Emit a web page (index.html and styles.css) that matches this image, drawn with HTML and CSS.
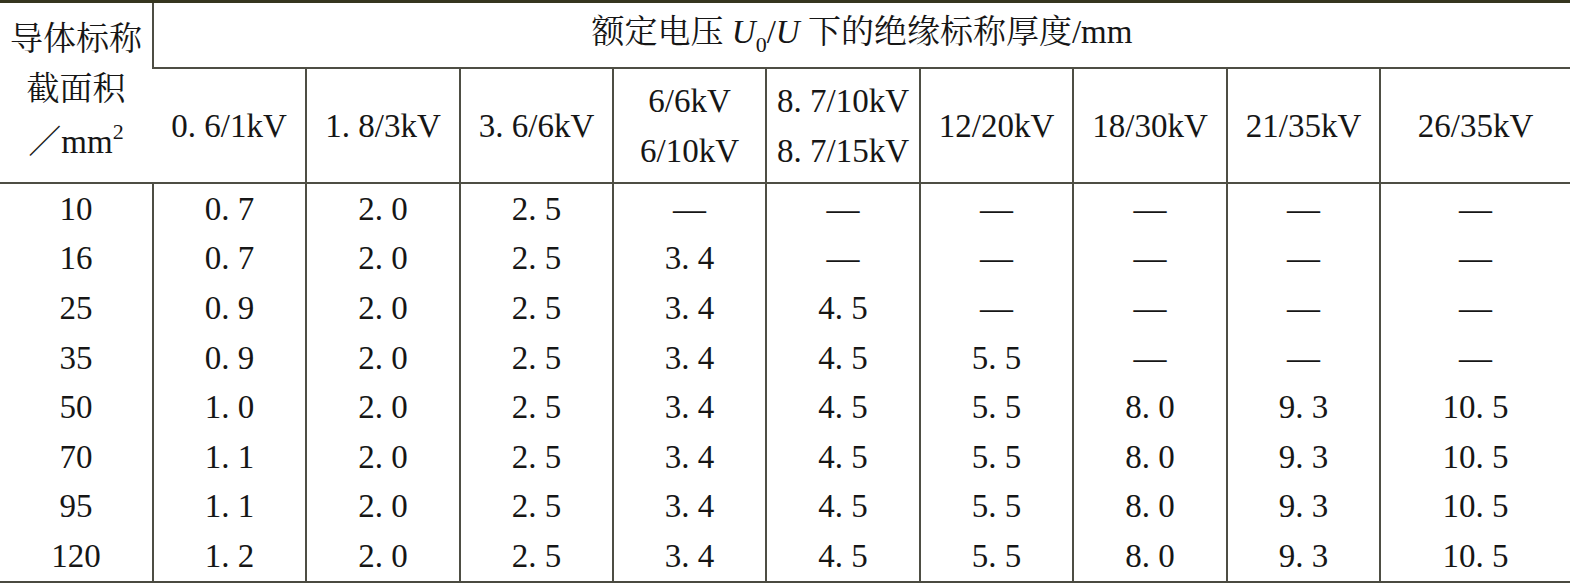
FILE: index.html
```html
<!DOCTYPE html>
<html lang="zh-CN">
  <head>
    <meta charset="UTF-8" />
    <title>绝缘标称厚度</title>
    <link rel="stylesheet" href="styles.css">
  </head>
  <body>
    <table class="thickTable">
      <colgroup>
        <col class="c1" />
        <col class="c2" />
        <col class="c3" />
        <col class="c4" />
        <col class="c5" />
        <col class="c6" />
        <col class="c7" />
        <col class="c8" />
        <col class="c9" />
        <col class="c10" />
      </colgroup>
      <thead>
        <tr class="headTop">
          <th rowspan="2" class="firstHead">导体标称<br />截面积<br /><span class="wideSlash">／</span>mm<sup>2</sup></th>
          <th colspan="9" class="mainHead">额定电压 <i>U</i><sub>0</sub>/<i>U</i> 下的绝缘标称厚度/mm</th>
        </tr>
        <tr class="headSub">
          <th>0. 6/1kV</th>
          <th>1. 8/3kV</th>
          <th>3. 6/6kV</th>
          <th>6/6kV<br />6/10kV</th>
          <th>8. 7/10kV<br />8. 7/15kV</th>
          <th>12/20kV</th>
          <th>18/30kV</th>
          <th>21/35kV</th>
          <th>26/35kV</th>
        </tr>
      </thead>
      <tbody>
        <tr>
          <td>10</td><td>0. 7</td><td>2. 0</td><td>2. 5</td><td>—</td><td>—</td><td>—</td><td>—</td><td>—</td><td>—</td>
        </tr>
        <tr>
          <td>16</td><td>0. 7</td><td>2. 0</td><td>2. 5</td><td>3. 4</td><td>—</td><td>—</td><td>—</td><td>—</td><td>—</td>
        </tr>
        <tr>
          <td>25</td><td>0. 9</td><td>2. 0</td><td>2. 5</td><td>3. 4</td><td>4. 5</td><td>—</td><td>—</td><td>—</td><td>—</td>
        </tr>
        <tr>
          <td>35</td><td>0. 9</td><td>2. 0</td><td>2. 5</td><td>3. 4</td><td>4. 5</td><td>5. 5</td><td>—</td><td>—</td><td>—</td>
        </tr>
        <tr>
          <td>50</td><td>1. 0</td><td>2. 0</td><td>2. 5</td><td>3. 4</td><td>4. 5</td><td>5. 5</td><td>8. 0</td><td>9. 3</td><td>10. 5</td>
        </tr>
        <tr>
          <td>70</td><td>1. 1</td><td>2. 0</td><td>2. 5</td><td>3. 4</td><td>4. 5</td><td>5. 5</td><td>8. 0</td><td>9. 3</td><td>10. 5</td>
        </tr>
        <tr>
          <td>95</td><td>1. 1</td><td>2. 0</td><td>2. 5</td><td>3. 4</td><td>4. 5</td><td>5. 5</td><td>8. 0</td><td>9. 3</td><td>10. 5</td>
        </tr>
        <tr>
          <td>120</td><td>1. 2</td><td>2. 0</td><td>2. 5</td><td>3. 4</td><td>4. 5</td><td>5. 5</td><td>8. 0</td><td>9. 3</td><td>10. 5</td>
        </tr>
      </tbody>
    </table>
  </body>
</html>
```

FILE: styles.css
```css
* {
  margin: 0;
  padding: 0;
}
body {
  background: #fff;
}
.thickTable {
  width: 1570px;
  table-layout: fixed;
  border-collapse: collapse;
  font-family: "Liberation Serif", "Noto Serif CJK SC", "Noto Sans CJK SC", serif;
  font-size: 33px;
  color: #161616;
  border-top: 3px solid #35351f;
  border-bottom: 3px solid #4a4a40;
}
.thickTable .c1,
.thickTable .c2,
.thickTable .c3,
.thickTable .c4,
.thickTable .c5,
.thickTable .c6,
.thickTable .c7,
.thickTable .c8,
.thickTable .c9 {
  width: 153px;
}
.thickTable .c3,
.thickTable .c6,
.thickTable .c8 {
  width: 154px;
}
.thickTable th,
.thickTable td {
  text-align: center;
  font-weight: normal;
  padding: 0;
  border-left: 2px solid #4e4e44;
}
.thickTable th:first-child,
.thickTable td:first-child {
  border-left: none;
}
.thickTable .headTop th {
  height: 64px;
  line-height: 40px;
  border-bottom: 2px solid #4e4e44;
}
.thickTable .headTop .mainHead {
  padding-bottom: 6px;
  height: 58px;
}
.thickTable .headTop th i {
  font-style: italic;
}
.thickTable .headTop th sub {
  font-size: 22px;
  line-height: 0;
  vertical-align: -9px;
}
.thickTable .headSub th {
  height: 113px;
  line-height: 50px;
  border-bottom: 2px solid #4e4e44;
}
.thickTable .headTop .firstHead {
  line-height: 50px;
  padding-bottom: 4px;
}
.thickTable .firstHead .wideSlash {
  font-family: "Noto Sans CJK SC", sans-serif;
  font-weight: 300;
}
.thickTable .firstHead sup {
  font-size: 22px;
  line-height: 0;
  vertical-align: 14px;
}
.thickTable tbody td {
  height: 49.6px;
  line-height: 40px;
}
```
